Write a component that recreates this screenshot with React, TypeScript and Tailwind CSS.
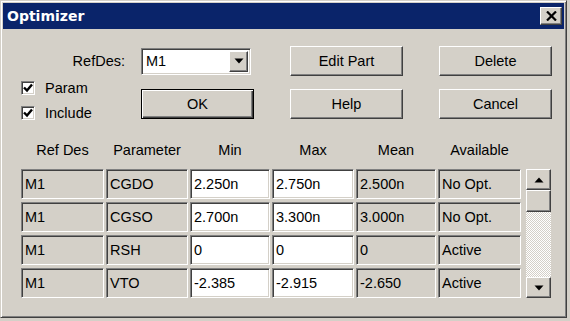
import React from "react";

const raised =
  "bg-[#d4d0c8] border border-t-white border-l-white border-r-[#404040] border-b-[#404040] shadow-[inset_-1px_-1px_0_#808080]";
const sunken =
  "border border-t-[#808080] border-l-[#808080] border-r-white border-b-white shadow-[inset_1px_1px_0_#404040,inset_-1px_-1px_0_#d4d0c8]";

const ROWS = [
  { ref: "M1", param: "CGDO", min: "2.250n", max: "2.750n", mean: "2.500n", avail: "No Opt." },
  { ref: "M1", param: "CGSO", min: "2.700n", max: "3.300n", mean: "3.000n", avail: "No Opt." },
  { ref: "M1", param: "RSH", min: "0", max: "0", mean: "0", avail: "Active" },
  { ref: "M1", param: "VTO", min: "-2.385", max: "-2.915", mean: "-2.650", avail: "Active" },
];

const HEADERS = ["Ref Des", "Parameter", "Min", "Max", "Mean", "Available"];

function Button({ label, isDefault }: { label: string; isDefault?: boolean }) {
  if (isDefault) {
    return (
      <div className="w-[113px] h-[30px] border border-black bg-[#d4d0c8] shadow-[inset_1px_1px_0_#fff,inset_-1px_-1px_0_#404040,inset_-2px_-2px_0_#808080] flex items-center justify-center">
        {label}
      </div>
    );
  }
  return (
    <div className={`w-[113px] h-[30px] ${raised} flex items-center justify-center`}>{label}</div>
  );
}

function Check({ label }: { label: string }) {
  return (
    <div className="h-[20px] flex items-center">
      <div className={`w-[14px] h-[14px] bg-white ${sunken} flex items-center justify-center`}>
        <svg width="10" height="10" viewBox="0 0 10 10">
          <polyline points="1,4.5 4,7.5 9,1.5" fill="none" stroke="#000" strokeWidth="2.4" />
        </svg>
      </div>
      <span className="ml-[10px]">{label}</span>
    </div>
  );
}

function Cell({ text, editable }: { text: string; editable?: boolean }) {
  return (
    <div
      className={`h-[30px] ${sunken} ${editable ? "bg-white" : "bg-[#d4d0c8]"} pl-[3px] flex items-center`}
    >
      {text}
    </div>
  );
}

function Arrow({ up }: { up?: boolean }) {
  return (
    <svg width="10" height="6" viewBox="0 0 10 6">
      <polygon points={up ? "5,0.5 9.5,5.5 0.5,5.5" : "0.5,0.5 9.5,0.5 5,5.5"} fill="#000" />
    </svg>
  );
}

export default function App() {
  return (
    <div className="w-[570px] h-[321px] bg-[#d4d0c8] font-['Liberation_Sans',Arial,sans-serif] text-[14.5px] text-black leading-none">
      <div className="w-[567px] h-[318px] border border-t-[#d4d0c8] border-l-[#d4d0c8] border-r-[#404040] border-b-[#404040] shadow-[inset_1px_1px_0_#fff,inset_-1px_-1px_0_#808080] p-[2px] flex flex-col">
        {/* Title bar */}
        <div className="h-[26px] bg-[#0a246a] flex items-center justify-between pl-[4px] pr-[2px]">
          <span className="font-['DejaVu_Sans',sans-serif] font-bold text-[14px] text-white">Optimizer</span>
          <div className={`w-[22px] h-[18px] ${raised} flex items-center justify-center`}>
            <svg width="11" height="10" viewBox="0 0 11 10">
              <path d="M1 0.5 L10 9.5 M10 0.5 L1 9.5" stroke="#000" strokeWidth="2.2" />
            </svg>
          </div>
        </div>

        {/* Body */}
        <div className="pl-[18px] pt-[17px] flex flex-col">
          <div className="flex">
            {/* Left part */}
            <div className="flex flex-col">
              <div className="h-[30px] flex items-center">
                <span className="w-[104px] text-right">RefDes:</span>
                <div className={`ml-[16px] w-[110px] h-[27px] bg-white ${sunken} flex items-center justify-between pl-[4px] pr-[2px]`}>
                  <span>M1</span>
                  <div className={`w-[19px] h-[21px] ${raised} flex items-center justify-center`}>
                    <svg width="10" height="6" viewBox="0 0 10 6">
                      <polygon points="0.5,0.5 9.5,0.5 5,5.5" fill="#000" />
                    </svg>
                  </div>
                </div>
              </div>
              <div className="flex items-start">
                <div className="mt-[2px] w-[120px] flex flex-col gap-[5px]">
                  <Check label="Param" />
                  <Check label="Include" />
                </div>
                <div className="mt-[13px]">
                  <Button label="OK" isDefault />
                </div>
              </div>
            </div>

            {/* Right buttons */}
            <div className="ml-[36px] grid grid-cols-[113px_113px] gap-x-[36px] gap-y-[13px] h-fit">
              <Button label="Edit Part" />
              <Button label="Delete" />
              <Button label="Help" />
              <Button label="Cancel" />
            </div>
          </div>

          {/* Table header */}
          <div className="mt-[17px] h-[20px] grid grid-cols-[83px_82px_80px_82px_80px_83px] gap-x-[2px] items-center">
            {HEADERS.map((h) => (
              <div key={h} className="text-center">
                {h}
              </div>
            ))}
          </div>

          {/* Table rows + scrollbar */}
          <div className="mt-[9px] flex">
            <div className="grid grid-cols-[83px_82px_80px_82px_80px_83px] gap-x-[2px] gap-y-[3px]">
              {ROWS.map((r, i) => (
                <React.Fragment key={i}>
                  <Cell text={r.ref} />
                  <Cell text={r.param} />
                  <Cell text={r.min} editable />
                  <Cell text={r.max} editable />
                  <Cell text={r.mean} />
                  <Cell text={r.avail} />
                </React.Fragment>
              ))}
            </div>
            <div className="ml-[5px] w-[25px] h-[129px] flex flex-col">
              <div className={`h-[21px] ${raised} flex items-center justify-center`}>
                <Arrow up />
              </div>
              <div className={`h-[22px] ${raised}`} />
              <div className="flex-1 bg-[image:repeating-conic-gradient(#ffffff_0%_25%,#d4d0c8_0%_50%)] bg-[length:2px_2px]" />
              <div className={`h-[21px] ${raised} flex items-center justify-center`}>
                <Arrow />
              </div>
            </div>
          </div>
        </div>
      </div>
    </div>
  );
}
